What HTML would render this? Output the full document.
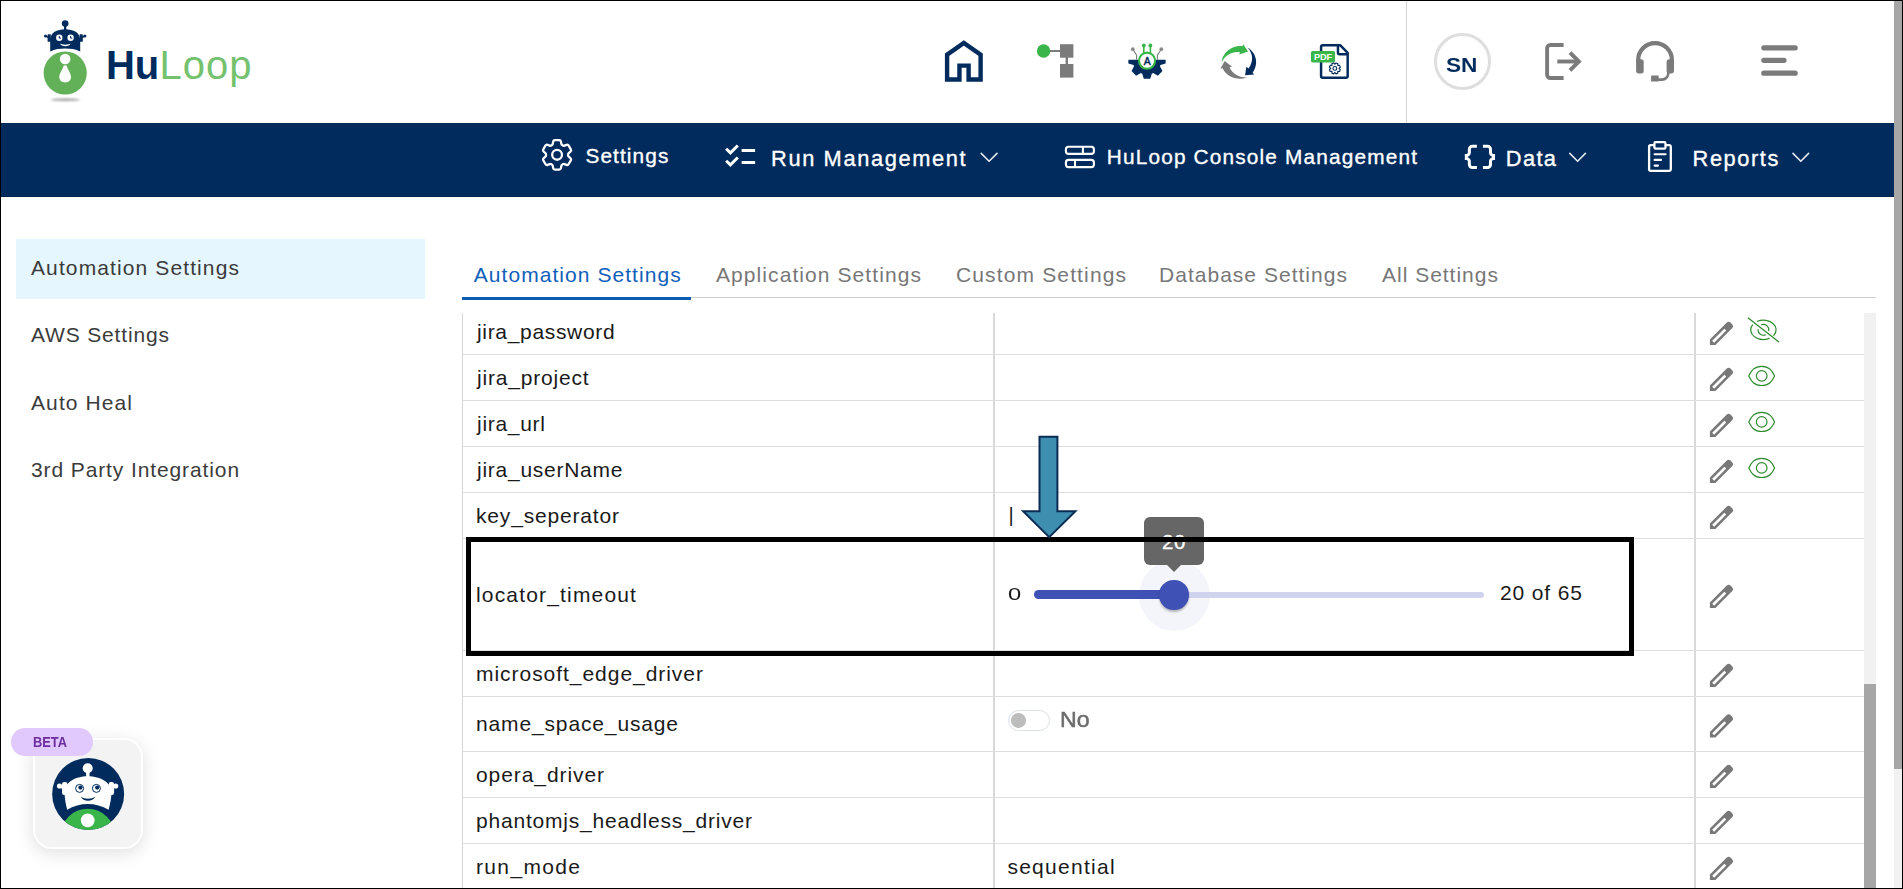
<!DOCTYPE html>
<html lang="en">
<head>
<meta charset="utf-8">
<title>HuLoop - Automation Settings</title>
<style>
html,body{margin:0;padding:0;}
body{width:1903px;height:889px;overflow:hidden;background:#fff;position:relative;font-family:"Liberation Sans",sans-serif;}
.abs{position:absolute;}
.t{position:absolute;white-space:pre;font-family:"Liberation Sans",sans-serif;z-index:5;}
#frame{position:absolute;left:0;top:0;width:1903px;height:889px;box-sizing:border-box;border:1px solid #000;z-index:100;pointer-events:none;}
#nav{position:absolute;left:1px;top:123px;width:1893px;height:74px;background:#002b5c;box-shadow:inset 0 -1px 0 #00214d;}
#pscroll{position:absolute;left:1894px;top:1px;width:8px;height:887px;background:#f1f1f1;}
#pscroll i{position:absolute;left:0;top:0;width:8px;height:768px;background:#a6a6a6;}
#iscroll{position:absolute;left:1864px;top:313px;width:12px;height:575px;background:#f1f1f1;}
#iscroll i{position:absolute;left:0;top:371px;width:12px;height:204px;background:#a6a6a6;}
#hdiv{position:absolute;left:1406px;top:1px;width:1px;height:122px;background:#d4d4d4;}
#sbsel{position:absolute;left:16px;top:239px;width:409px;height:60px;background:#e5f6fe;}
#tabline{position:absolute;left:462px;top:297px;width:1414px;height:1px;background:#cfcfcf;}
#tabink{position:absolute;left:462px;top:297px;width:229px;height:3px;background:#0c5cb2;}
.hl{position:absolute;left:462px;width:1402px;height:1px;background:#dedede;}
.vl{position:absolute;top:313px;height:575px;background:#d9d9d9;}
#avatar{position:absolute;left:1433.7px;top:32.8px;width:57.4px;height:57.4px;box-sizing:border-box;border:3px solid #dedede;border-radius:50%;}
#blackbox{position:absolute;left:466px;top:537px;width:1168px;height:119px;box-sizing:border-box;border:5px solid #000;z-index:20;}
svg{position:absolute;left:0;top:0;overflow:visible;}
#g1{z-index:4;}
#g2{z-index:25;}
#g3{z-index:9;}
/* slider */
#trk0{position:absolute;left:1034px;top:592px;width:450px;height:6px;border-radius:3px;background:#cfd3ee;}
#trk1{position:absolute;left:1034px;top:590px;width:142px;height:9px;border-radius:4.5px;background:#3f51b5;}
#halo{position:absolute;left:1138.5px;top:559.5px;width:71px;height:71px;border-radius:50%;background:rgba(63,81,181,0.055);}
#thumb{position:absolute;left:1159.3px;top:580.3px;width:29.4px;height:29.4px;border-radius:50%;background:#3f51b5;box-shadow:0 2px 2px rgba(0,0,0,.25);z-index:6;}
#tip{position:absolute;left:1144px;top:517px;width:60px;height:48px;border-radius:6px;background:#666;z-index:10;color:#fff;font-size:20.5px;line-height:50.5px;text-align:center;letter-spacing:.6px;-webkit-text-stroke:.3px #fff;}
#tip:after{content:"";position:absolute;left:23px;top:47.5px;border:7px solid transparent;border-top-color:#666;border-bottom-width:0;}
/* toggle */
#tog{position:absolute;left:1007.9px;top:709.8px;width:42px;height:21.1px;box-sizing:border-box;border:1px solid #d9e0e8;border-radius:11px;background:#fff;}
#tog i{position:absolute;left:2.2px;top:2.1px;width:14.7px;height:14.7px;border-radius:50%;background:#bdbdbd;}
/* beta widget */
#chat{position:absolute;left:33px;top:738px;width:110px;height:111px;box-sizing:border-box;border:2px solid #fff;border-radius:19px;background:#f3f3f3;box-shadow:0 4px 18px rgba(0,0,0,.13);z-index:8;}
#beta{position:absolute;left:11px;top:728px;width:82px;height:27.5px;border-radius:14px;background:#e1c9fd;z-index:10;}
</style>
</head>
<body>
<div id="nav"></div>
<div id="hdiv"></div>
<div id="avatar"></div>
<div id="sbsel"></div>
<div id="tabline"></div><div id="tabink"></div>

<!-- table grid -->
<div class="vl" style="left:462px;width:1px;background:#d6d6d6"></div>
<div class="vl" style="left:993px;width:2px"></div>
<div class="vl" style="left:1694px;width:2px"></div>
<div class="hl" style="top:354px"></div>
<div class="hl" style="top:400px"></div>
<div class="hl" style="top:446px"></div>
<div class="hl" style="top:492px"></div>
<div class="hl" style="top:538px"></div>
<div class="hl" style="top:650px"></div>
<div class="hl" style="top:696px"></div>
<div class="hl" style="top:751px"></div>
<div class="hl" style="top:797px"></div>
<div class="hl" style="top:843px"></div>
<div id="iscroll"><i></i></div>
<div id="pscroll"><i></i></div>

<!-- slider -->
<div id="halo"></div>
<div id="trk0"></div><div id="trk1"></div>
<div id="thumb"></div>
<div id="tip">20</div>
<div id="tog"><i></i></div>
<div id="blackbox"></div>

<div id="chat"></div>
<div id="beta"></div>

<span class="t" style="left:31.0px;top:257.2px;font-size:21px;line-height:21px;font-weight:400;color:#3b3b3b;letter-spacing:1.11px;">Automation Settings</span>
<span class="t" style="left:31.0px;top:324.2px;font-size:21px;line-height:21px;font-weight:400;color:#3b3b3b;letter-spacing:0.84px;">AWS Settings</span>
<span class="t" style="left:31.0px;top:392.0px;font-size:21px;line-height:21px;font-weight:400;color:#3b3b3b;letter-spacing:1.1px;">Auto Heal</span>
<span class="t" style="left:31.0px;top:459.2px;font-size:21px;line-height:21px;font-weight:400;color:#3b3b3b;letter-spacing:0.89px;">3rd Party Integration</span>
<span class="t" style="left:473.7px;top:264.2px;font-size:21px;line-height:21px;font-weight:400;color:#0f60ba;letter-spacing:1.06px;">Automation Settings</span>
<span class="t" style="left:716.0px;top:264.2px;font-size:21px;line-height:21px;font-weight:400;color:#777;letter-spacing:1.08px;">Application Settings</span>
<span class="t" style="left:956.0px;top:264.2px;font-size:21px;line-height:21px;font-weight:400;color:#777;letter-spacing:1.14px;">Custom Settings</span>
<span class="t" style="left:1159.0px;top:264.2px;font-size:21px;line-height:21px;font-weight:400;color:#777;letter-spacing:1.02px;">Database Settings</span>
<span class="t" style="left:1382.0px;top:264.2px;font-size:21px;line-height:21px;font-weight:400;color:#777;letter-spacing:0.99px;">All Settings</span>
<span class="t" style="left:477.0px;top:321.2px;font-size:21px;line-height:21px;font-weight:400;color:#1a1a1a;letter-spacing:0.67px;">jira_password</span>
<span class="t" style="left:477.0px;top:367.2px;font-size:21px;line-height:21px;font-weight:400;color:#1a1a1a;letter-spacing:0.8px;">jira_project</span>
<span class="t" style="left:477.0px;top:413.2px;font-size:21px;line-height:21px;font-weight:400;color:#1a1a1a;letter-spacing:0.71px;">jira_url</span>
<span class="t" style="left:477.0px;top:459.2px;font-size:21px;line-height:21px;font-weight:400;color:#1a1a1a;letter-spacing:0.74px;">jira_userName</span>
<span class="t" style="left:476.0px;top:505.2px;font-size:21px;line-height:21px;font-weight:400;color:#1a1a1a;letter-spacing:0.83px;">key_seperator</span>
<span class="t" style="left:476.0px;top:584.2px;font-size:21px;line-height:21px;font-weight:400;color:#1a1a1a;letter-spacing:1.17px;">locator_timeout</span>
<span class="t" style="left:476.0px;top:663.2px;font-size:21px;line-height:21px;font-weight:400;color:#1a1a1a;letter-spacing:0.96px;">microsoft_edge_driver</span>
<span class="t" style="left:476.0px;top:713.0px;font-size:21px;line-height:21px;font-weight:400;color:#1a1a1a;letter-spacing:0.86px;">name_space_usage</span>
<span class="t" style="left:476.0px;top:763.7px;font-size:21px;line-height:21px;font-weight:400;color:#1a1a1a;letter-spacing:0.92px;">opera_driver</span>
<span class="t" style="left:476.0px;top:810.2px;font-size:21px;line-height:21px;font-weight:400;color:#1a1a1a;letter-spacing:0.8px;">phantomjs_headless_driver</span>
<span class="t" style="left:476.0px;top:856.2px;font-size:21px;line-height:21px;font-weight:400;color:#1a1a1a;letter-spacing:1.35px;">run_mode</span>
<span class="t" style="left:1007.4px;top:856.2px;font-size:21px;line-height:21px;font-weight:400;color:#1a1a1a;letter-spacing:1.27px;">sequential</span>
<span class="t" style="left:1008.1px;top:586.7px;font-size:16.6px;line-height:16.6px;font-weight:400;color:#1a1a1a;letter-spacing:0px;transform:scaleX(1.4294);transform-origin:0 0;">0</span>
<span class="t" style="left:1500.0px;top:582.2px;font-size:21px;line-height:21px;font-weight:400;color:#1a1a1a;letter-spacing:0.87px;">20 of 65</span>
<span class="t" style="left:1008.6px;top:504.9px;font-size:20px;line-height:20px;font-weight:400;color:#1a1a1a;letter-spacing:0px;">|</span>
<span class="t" style="left:1060.1px;top:709.5px;font-size:21.5px;line-height:21.5px;font-weight:400;color:#6c6c6c;letter-spacing:0px;-webkit-text-stroke:0.5px #6c6c6c;transform:scaleX(1.077);transform-origin:0 0;">No</span>
<span class="t" style="left:585.4px;top:145.6px;font-size:20.8px;line-height:20.8px;font-weight:400;color:#fff;letter-spacing:1.12px;-webkit-text-stroke:0.35px #fff;">Settings</span>
<span class="t" style="left:771.0px;top:147.5px;font-size:21.8px;line-height:21.8px;font-weight:400;color:#fff;letter-spacing:1.64px;-webkit-text-stroke:0.35px #fff;">Run Management</span>
<span class="t" style="left:1106.8px;top:146.7px;font-size:20.8px;line-height:20.8px;font-weight:400;color:#fff;letter-spacing:1.17px;-webkit-text-stroke:0.35px #fff;">HuLoop Console Management</span>
<span class="t" style="left:1505.8px;top:147.5px;font-size:21.8px;line-height:21.8px;font-weight:400;color:#fff;letter-spacing:1.38px;-webkit-text-stroke:0.35px #fff;">Data</span>
<span class="t" style="left:1692.6px;top:147.5px;font-size:21.8px;line-height:21.8px;font-weight:400;color:#fff;letter-spacing:1.58px;-webkit-text-stroke:0.35px #fff;">Reports</span>
<span class="t" style="left:106.0px;top:45.0px;font-size:40px;line-height:40px;font-weight:700;color:#002b5c;letter-spacing:-0.13px;">Hu</span>
<span class="t" style="left:159.4px;top:45.0px;font-size:40px;line-height:40px;font-weight:400;color:#74c26e;letter-spacing:1.01px;">Loop</span>
<span class="t" style="left:1446.2px;top:55.0px;font-size:20.8px;line-height:20.8px;font-weight:700;color:#002b5c;letter-spacing:0px;transform:scaleX(1.0869);transform-origin:0 0;">SN</span>
<span class="t" style="left:33.2px;top:734.9px;font-size:14px;line-height:14px;font-weight:700;color:#6a2c9e;letter-spacing:0px;z-index:30;transform:scaleX(0.917);transform-origin:0 0;">BETA</span>

<svg id="g1" width="1903" height="889" viewBox="0 0 1903 889">
<!-- logo robot -->
<defs><filter id="blur1" x="-20%" y="-200%" width="140%" height="500%"><feGaussianBlur stdDeviation="1.1"/></filter></defs>
<ellipse cx="65.3" cy="99.8" rx="14.5" ry="1.5" fill="#8f8f8f" opacity=".75" filter="url(#blur1)"/>
<circle cx="65.2" cy="73" r="21.6" fill="#62b159"/>
<circle cx="65.15" cy="59" r="5.3" fill="#fff"/>
<path d="M63.7,65.6 h2.9 C67.6,69.5 71,73.5 71,77 C71,80.3 68.6,82.4 65.15,82.4 C61.7,82.4 59.3,80.3 59.3,77 C59.3,73.5 62.7,69.5 63.7,65.6 Z" fill="#fff"/>
<g fill="#002b5c">
<circle cx="65.15" cy="23.6" r="3.3"/>
<rect x="64" y="25" width="2.3" height="6"/>
<path d="M50.2,51.4 C50.2,48 50.2,44 50.2,40 C50.2,32.5 57,29.2 65.2,29.2 C73.4,29.2 80.2,32.5 80.2,40 C80.2,44 80.2,48 80.2,51.4 C75.5,49.2 70.5,48.6 65.2,48.6 C59.9,48.6 54.9,49.2 50.2,51.4 Z"/>
<rect x="47.6" y="34.2" width="3.2" height="7.6" rx=".6"/>
<rect x="79.6" y="34.2" width="3.2" height="7.6" rx=".6"/>
<circle cx="45.5" cy="35.9" r="1.5"/><circle cx="84.9" cy="35.9" r="1.5"/>
<rect x="45.5" y="35.2" width="3" height="1.6" transform="rotate(25 45.5 36)"/>
<rect x="81.9" y="35.2" width="3" height="1.6" transform="rotate(-25 84.9 36)"/>
</g>
<circle cx="59.3" cy="37.8" r="3.2" fill="#fff"/><circle cx="70.6" cy="37.8" r="3.2" fill="#fff"/>
<path d="M59.3,36 v2.1 h1.7 M70.6,36 v2.1 h1.7" fill="none" stroke="#002b5c" stroke-width="1"/>
<path d="M60,43.6 C62,45 68.5,45 70.6,43.6 C69.6,47.2 61,47.2 60,43.6 Z" fill="#fff"/>
<!-- home -->
<path d="M959.45,79.5 H947.1 V54.74 L963.85,42.9 L980.6,54.74 V79.5 H968.6 V65.6 H959.45 Z" fill="none" stroke="#002b5c" stroke-width="4.4" stroke-linejoin="miter"/>
<!-- flow -->
<g fill="#7b7b7b">
<rect x="1060" y="44.2" width="13.4" height="13.5"/>
<rect x="1060" y="64" width="13.4" height="13.6"/>
<rect x="1049" y="50" width="12" height="2"/>
<rect x="1065.6" y="57" width="2.4" height="8"/>
</g>
<circle cx="1043.6" cy="51" r="6.7" fill="#3ab54a"/>
<!-- divider done in html -->
<!-- logout -->
<g fill="none" stroke="#7b7b7b" stroke-width="3.9" stroke-linecap="butt" stroke-linejoin="round">
<path d="M1563.6,44.95 H1550.5 a3.4,3.4 0 0 0 -3.4,3.4 V74.65 a3.4,3.4 0 0 0 3.4,3.4 H1563.6"/>
<path d="M1557.3,61.5 H1578.5" />
<path d="M1570,52.6 L1578.9,61.5 L1570,70.4" stroke-linejoin="miter" stroke-miterlimit="10"/>
</g>
<!-- headset -->
<g fill="none" stroke="#7b7b7b" stroke-linecap="butt" stroke-linejoin="round">
<path d="M1638.2,62 V60 a16.85,16.85 0 0 1 33.7,0 V62" stroke-width="4.2"/>
<path d="M1668.3,72 V73.3 a6.3,6.3 0 0 1 -6.3,6.3 H1657" stroke-width="2.6"/>
</g>
<g fill="#7b7b7b">
<rect x="1636.1" y="59.2" width="7.6" height="14.2" rx="2.6"/>
<rect x="1666.6" y="59.2" width="7.4" height="14.2" rx="2.600"/>
<rect x="1651.1" y="75.4" width="7.6" height="6.1" rx=".6"/>
</g>
<!-- hamburger -->
<g stroke="#7b7b7b" stroke-width="5.2" stroke-linecap="round">
<path d="M1763.8,47.8 H1795.2 M1763.8,60.3 H1784 M1763.8,73.2 H1795.2"/>
</g>
<!-- gear A -->
<clipPath id="cg"><rect x="1120" y="59.75" width="60" height="30"/></clipPath>
<path d="M1160.47,55.40 L1165.63,57.00 L1165.63,63.40 L1160.47,65.00 L1159.92,66.33 L1162.43,71.11 L1157.91,75.63 L1153.13,73.12 L1151.80,73.67 L1150.20,78.83 L1143.80,78.83 L1142.20,73.67 L1140.87,73.12 L1136.09,75.63 L1131.57,71.11 L1134.08,66.33 L1133.53,65.00 L1128.37,63.40 L1128.37,57.00 L1133.53,55.40 L1134.08,54.07 L1131.57,49.29 L1136.09,44.77 L1140.87,47.28 L1142.20,46.73 L1143.80,41.57 L1150.20,41.57 L1151.80,46.73 L1153.13,47.28 L1157.91,44.77 L1162.43,49.29 L1159.92,54.07 Z" fill="#002b5c" clip-path="url(#cg)"/>
<circle cx="1147.04" cy="60.7" r="8.05" fill="#fff" stroke="#3ab54a" stroke-width="2.1"/>
<g stroke="#3ab54a" stroke-width="1.6" fill="none"><path d="M1143.8,53.2 V46 M1150.4,53.2 V46"/></g>
<circle cx="1143.8" cy="45.5" r="1.9" fill="#3ab54a"/><circle cx="1150.4" cy="45.5" r="1.9" fill="#3ab54a"/>
<g stroke="#7b7b7b" stroke-width="1.1" fill="none"><path d="M1132.8,49.2 L1136.6,55.1 V59.8 M1161.3,49.2 L1157.4,55.1 V59.8"/></g>
<circle cx="1132.8" cy="49.2" r="1.9" fill="#8a8a8a"/><circle cx="1161.3" cy="49.2" r="1.9" fill="#8a8a8a"/>
<text x="1147.1" y="65.1" font-family="Liberation Sans, sans-serif" font-size="10.4" font-weight="400" fill="#002b5c" stroke="#002b5c" stroke-width=".45" text-anchor="middle">A</text>
<!-- recycle -->
<g transform="translate(1212 35) scale(0.06188)">
<path d="M155,440 C165,290 320,165 490,180 L505,148 L582,265 L440,315 L452,278 C330,260 220,320 155,440 Z" fill="#3ab54a"/>
<path d="M575,205 C700,270 770,450 655,610 L682,638 L535,650 L555,515 L590,540 C680,420 660,290 575,205 Z" fill="#002b5c"/>
<path d="M570,685 C420,740 240,690 172,538 L135,545 L205,420 L320,510 L285,520 C320,620 430,690 570,685 Z" fill="#7b7b7b"/>
</g>
<!-- pdf -->
<g transform="translate(1303 35) scale(0.06188)">
<path d="M600,165 H320 a28,28 0 0 0 -28,28 V662 a28,28 0 0 0 28,28 H694 a28,28 0 0 0 28,-28 V290 Z M565,165 V285 a25,25 0 0 0 25,25 H722" fill="#fff" stroke="#002b5c" stroke-width="40" stroke-linejoin="round"/>
<rect x="128" y="258" width="390" height="187" rx="28" fill="#3ab54a"/>
</g>
<path d="M1339.07,68.53 L1340.34,69.60 L1339.58,71.45 L1337.92,71.30 L1337.76,71.47 L1337.90,73.12 L1336.05,73.89 L1334.98,72.61 L1334.75,72.61 L1333.68,73.89 L1331.84,73.12 L1331.98,71.47 L1331.82,71.30 L1330.16,71.45 L1329.40,69.60 L1330.67,68.53 L1330.67,68.30 L1329.40,67.23 L1330.16,65.38 L1331.82,65.53 L1331.98,65.37 L1331.84,63.71 L1333.68,62.94 L1334.75,64.22 L1334.98,64.22 L1336.05,62.94 L1337.90,63.71 L1337.76,65.37 L1337.92,65.53 L1339.58,65.38 L1340.34,67.23 L1339.07,68.30 Z" fill="none" stroke="#002b5c" stroke-width="1.1" stroke-linejoin="round"/>
<circle cx="1334.87" cy="68.42" r="1.9" fill="none" stroke="#002b5c" stroke-width="1.1"/>
<text x="1323.05" y="59.9" font-family="Liberation Sans, sans-serif" font-size="9.2" font-weight="700" fill="#fff" text-anchor="middle" letter-spacing="-0.1">PDF</text>
<!-- nav: settings cog -->
<g transform="translate(537.5 135.3) scale(1.63)" fill="none" stroke="#fff" stroke-width="1.4" stroke-linecap="round" stroke-linejoin="round">
<path d="M9.594 3.94c.09-.542.56-.94 1.11-.94h2.593c.55 0 1.02.398 1.11.94l.213 1.281c.063.374.313.686.645.87.074.04.147.083.22.127.325.196.72.257 1.075.124l1.217-.456a1.125 1.125 0 0 1 1.37.49l1.296 2.247a1.125 1.125 0 0 1-.26 1.431l-1.003.827c-.293.241-.438.613-.43.992a7.723 7.723 0 0 1 0 .255c-.008.378.137.75.43.991l1.004.827c.424.35.534.955.26 1.43l-1.298 2.247a1.125 1.125 0 0 1-1.369.491l-1.217-.456c-.355-.133-.75-.072-1.076.124a6.47 6.47 0 0 1-.22.128c-.331.183-.581.495-.644.869l-.213 1.281c-.09.543-.56.94-1.11.94h-2.594c-.55 0-1.019-.398-1.11-.94l-.213-1.281c-.062-.374-.312-.686-.644-.87a6.52 6.52 0 0 1-.22-.127c-.325-.196-.72-.257-1.076-.124l-1.217.456a1.125 1.125 0 0 1-1.369-.49l-1.297-2.247a1.125 1.125 0 0 1 .26-1.431l1.004-.827c.292-.24.437-.613.43-.991a6.932 6.932 0 0 1 0-.255c.007-.38-.138-.751-.43-.992l-1.004-.827a1.125 1.125 0 0 1-.26-1.430l1.297-2.247a1.125 1.125 0 0 1 1.370-.491l1.216.456c.356.133.751.072 1.076-.124.072-.044.146-.086.22-.128.332-.183.582-.495.644-.869l.214-1.280Z"/>
<path d="M15 12a3 3 0 1 1-6 0 3 3 0 0 1 6 0Z"/>
</g>
<!-- checklist -->
<g transform="translate(722.1 138.6) scale(1.5)" fill="#fff">
<path d="M22 7h-9v2h9V7zm0 8h-9v2h9v-2zM5.54 11L2 7.46l1.41-1.41 2.12 2.12 4.24-4.24 1.41 1.41L5.54 11zm0 8L2 15.46l1.41-1.41 2.12 2.12 4.24-4.24 1.41 1.41L5.54 19z"/>
</g>
<!-- chevrons -->
<g fill="none" stroke="#e3e8ef" stroke-width="1.6" stroke-linecap="round" stroke-linejoin="round">
<path d="M981.2,153.4 L989.1,161.3 L997,153.4"/>
<path d="M1569.8,153.4 L1577.6,161.3 L1585.4,153.4"/>
<path d="M1793,153.4 L1800.8,161.3 L1808.6,153.4"/>
</g>
<!-- console -->
<g fill="none" stroke="#fff" stroke-width="2.1">
<rect x="1065.9" y="146.8" width="28" height="7.1" rx="2.6"/>
<rect x="1065.9" y="159.9" width="28" height="7.2" rx="2.6"/>
<path d="M1082.9,146.8 V153.9 M1075,159.9 V167.1"/>
</g>
<!-- data braces -->
<g transform="translate(1461.8 138.8) scale(1.51)" fill="#fff">
<path d="M4 7v2c0 .55-.45 1-1 1H2v4h1c.55 0 1 .45 1 1v2c0 1.65 1.35 3 3 3h3v-2H7c-.55 0-1-.45-1-1v-2c0-1.3-.84-2.42-2-2.830v-.34C5.160 11.420 6 10.300 6 9V7c0-.55.45-1 1-1h3V4H7C5.350 4 4 5.350 4 7zM21 10c-.55 0-1-.45-1-1V7c0-1.650-1.350-3-3-3h-3v2h3c.55 0 1 .45 1 1v2c0 1.300.84 2.420 2 2.830v.34c-1.160.41-2 1.520-2 2.830v2c0 .55-.45 1-1 1h-3v2h3c1.650 0 3-1.350 3-3v-2c0-.55.45-1 1-1h1v-4h-1z"/>
</g>
<!-- clipboard -->
<g fill="none" stroke="#fff" stroke-width="2.3" stroke-linejoin="round">
<path d="M1654.4,145.2 H1650.7 a1.6,1.6 0 0 0 -1.6,1.6 V169.3 a1.6,1.6 0 0 0 1.6,1.6 H1669.2 a1.6,1.6 0 0 0 1.6,-1.600 V146.8 a1.6,1.6 0 0 0 -1.600,-1.600 H1665.500"/>
<rect x="1654.4" y="142.1" width="11.1" height="6.6" rx="1.3"/>
</g>
<g stroke="#fff" stroke-width="2.1" stroke-linecap="round"><path d="M1654.6,154.2 H1665.6 M1654.600,159.9 H1661 M1654.600,165.6 H1658"/></g>
<!-- pencils -->
<g transform="translate(1709.9 345.0) rotate(-45)"><path d="M0,0 L3.9,-3.9 H27.799999999999997 A2.6,2.6 0 0 1 30.4,-1.2999999999999998 V1.2999999999999998 A2.6,2.6 0 0 1 27.799999999999997,3.9 H3.9 Z" fill="#787878"/><rect x="4.6" y="-1.35" width="17.2" height="2.7" fill="#fff"/></g>
<g transform="translate(1709.9 391.0) rotate(-45)"><path d="M0,0 L3.9,-3.9 H27.799999999999997 A2.6,2.6 0 0 1 30.4,-1.2999999999999998 V1.2999999999999998 A2.6,2.6 0 0 1 27.799999999999997,3.9 H3.9 Z" fill="#787878"/><rect x="4.6" y="-1.35" width="17.2" height="2.7" fill="#fff"/></g>
<g transform="translate(1709.9 437.0) rotate(-45)"><path d="M0,0 L3.9,-3.9 H27.799999999999997 A2.6,2.6 0 0 1 30.4,-1.2999999999999998 V1.2999999999999998 A2.6,2.6 0 0 1 27.799999999999997,3.9 H3.9 Z" fill="#787878"/><rect x="4.6" y="-1.35" width="17.2" height="2.7" fill="#fff"/></g>
<g transform="translate(1709.9 483.0) rotate(-45)"><path d="M0,0 L3.9,-3.9 H27.799999999999997 A2.6,2.6 0 0 1 30.4,-1.2999999999999998 V1.2999999999999998 A2.6,2.6 0 0 1 27.799999999999997,3.9 H3.9 Z" fill="#787878"/><rect x="4.6" y="-1.35" width="17.2" height="2.7" fill="#fff"/></g>
<g transform="translate(1709.9 529.0) rotate(-45)"><path d="M0,0 L3.9,-3.9 H27.799999999999997 A2.6,2.6 0 0 1 30.4,-1.2999999999999998 V1.2999999999999998 A2.6,2.6 0 0 1 27.799999999999997,3.9 H3.9 Z" fill="#787878"/><rect x="4.6" y="-1.35" width="17.2" height="2.7" fill="#fff"/></g>
<g transform="translate(1709.9 608.0) rotate(-45)"><path d="M0,0 L3.9,-3.9 H27.799999999999997 A2.6,2.6 0 0 1 30.4,-1.2999999999999998 V1.2999999999999998 A2.6,2.6 0 0 1 27.799999999999997,3.9 H3.9 Z" fill="#787878"/><rect x="4.6" y="-1.35" width="17.2" height="2.7" fill="#fff"/></g>
<g transform="translate(1709.9 687.0) rotate(-45)"><path d="M0,0 L3.9,-3.9 H27.799999999999997 A2.6,2.6 0 0 1 30.4,-1.2999999999999998 V1.2999999999999998 A2.6,2.6 0 0 1 27.799999999999997,3.9 H3.9 Z" fill="#787878"/><rect x="4.6" y="-1.35" width="17.2" height="2.7" fill="#fff"/></g>
<g transform="translate(1709.9 737.5) rotate(-45)"><path d="M0,0 L3.9,-3.9 H27.799999999999997 A2.6,2.6 0 0 1 30.4,-1.2999999999999998 V1.2999999999999998 A2.6,2.6 0 0 1 27.799999999999997,3.9 H3.9 Z" fill="#787878"/><rect x="4.6" y="-1.35" width="17.2" height="2.7" fill="#fff"/></g>
<g transform="translate(1709.9 788.0) rotate(-45)"><path d="M0,0 L3.9,-3.9 H27.799999999999997 A2.6,2.6 0 0 1 30.4,-1.2999999999999998 V1.2999999999999998 A2.6,2.6 0 0 1 27.799999999999997,3.9 H3.9 Z" fill="#787878"/><rect x="4.6" y="-1.35" width="17.2" height="2.7" fill="#fff"/></g>
<g transform="translate(1709.9 834.0) rotate(-45)"><path d="M0,0 L3.9,-3.9 H27.799999999999997 A2.6,2.6 0 0 1 30.4,-1.2999999999999998 V1.2999999999999998 A2.6,2.6 0 0 1 27.799999999999997,3.9 H3.9 Z" fill="#787878"/><rect x="4.6" y="-1.35" width="17.2" height="2.7" fill="#fff"/></g>
<g transform="translate(1709.9 880.0) rotate(-45)"><path d="M0,0 L3.9,-3.9 H27.799999999999997 A2.6,2.6 0 0 1 30.4,-1.2999999999999998 V1.2999999999999998 A2.6,2.6 0 0 1 27.799999999999997,3.9 H3.9 Z" fill="#787878"/><rect x="4.6" y="-1.35" width="17.2" height="2.7" fill="#fff"/></g>
<!-- eyes -->
<g fill="none" stroke="#2c8c2c" stroke-width="1.2" stroke-linejoin="round">
<g transform="translate(1761.7 375.9)"><path d="M-12.9,0 C-10.4,-5.3 -7.5,-9.6 0,-9.6 C7.5,-9.6 10.4,-5.3 12.9,0 C10.4,5.3 7.5,9.6 0,9.6 C-7.5,9.6 -10.4,5.3 -12.9,0 Z"/><circle r="5.3"/></g>
<g transform="translate(1761.7 421.9)"><path d="M-12.9,0 C-10.4,-5.3 -7.5,-9.6 0,-9.6 C7.5,-9.6 10.4,-5.3 12.9,0 C10.4,5.3 7.5,9.6 0,9.6 C-7.5,9.6 -10.4,5.3 -12.9,0 Z"/><circle r="5.3"/></g>
<g transform="translate(1761.7 467.9)"><path d="M-12.9,0 C-10.4,-5.3 -7.5,-9.6 0,-9.6 C7.5,-9.6 10.4,-5.3 12.9,0 C10.4,5.3 7.5,9.6 0,9.6 C-7.5,9.6 -10.4,5.3 -12.9,0 Z"/><circle r="5.3"/></g>
<g transform="translate(1763.4 329.8)" stroke-linecap="round">
<path d="M-5.9,-8.5 A12.7,9.6 0 0 1 10.4,5.5"/>
<path d="M-10.9,-4.9 A12.7,9.6 0 0 0 5.7,8.6"/>
<path d="M-1.9,-5.05 A5.4,5.4 0 0 1 5.35,0.8"/>
<path d="M-5.4,-0.1 A5.4,5.4 0 0 0 1.9,5.05"/>
<path d="M-15.2,-11.8 L15.2,12"/>
</g>
</g>
</svg>
<svg id="g2" width="1903" height="889" viewBox="0 0 1903 889">
<!-- pointer arrow -->
<path d="M1039.5,436.8 H1057.4 V511.3 H1075.4 L1049.2,537.2 L1023.2,511.3 H1039.5 Z" fill="#3e8eb0" stroke="#0a2c55" stroke-width="2" stroke-linejoin="miter" stroke-miterlimit="10"/>

</svg>
<svg id="g3" width="1903" height="889" viewBox="0 0 1903 889">
<!-- chat bot -->
<clipPath id="cb"><circle cx="88.16" cy="794" r="36"/></clipPath>
<circle cx="88.16" cy="794" r="36" fill="#002b5c"/>
<g clip-path="url(#cb)">
<circle cx="87.7" cy="836" r="27.2" fill="#3ab54a"/>
</g>
<circle cx="87.7" cy="820.3" r="6.9" fill="#fff"/>
<g fill="#fff">
<circle cx="87.7" cy="768.2" r="5"/>
<rect x="86.100" y="771" width="3.400" height="8"/>
<path d="M67.18,809.75 C65.55,803.54 64.6,797.8 64.6,793.02 C64.6,782.5 74.64,776.29 87.73,776.29 C100.93,776.29 111.44,782.5 111.44,793.02 C111.44,797.8 110.3,803.54 108.58,809.75 C102.36,805.93 94.71,804.02 87.73,804.02 C80.85,804.02 73.2,805.93 67.18,809.75 Z"/>
<rect x="62" y="782" width="5.5" height="13" rx="2.2"/>
<rect x="108.6" y="782" width="5.5" height="13" rx="2.2"/>
<circle cx="59.500" cy="786" r="2.600"/><circle cx="115.700" cy="786" r="2.600"/>
<path d="M59.500,786 L64,789 M115.700,786 L111.500,789" stroke="#fff" stroke-width="2"/>
</g>
<g fill="#fff" stroke="#002b5c" stroke-width="1"><circle cx="79.600" cy="788.400" r="4"/><circle cx="96.400" cy="788.400" r="4"/></g>
<circle cx="80.400" cy="787.600" r="2.1" fill="#002b5c"/><circle cx="97.200" cy="787.600" r="2.1" fill="#002b5c"/>
<path d="M80.9,796.8 C84,799.3 92,799.3 95.2,796.8 C93,802.2 83,802.2 80.9,796.8 Z" fill="#002b5c"/>

</svg>
<div id="frame"></div>
</body>
</html>
